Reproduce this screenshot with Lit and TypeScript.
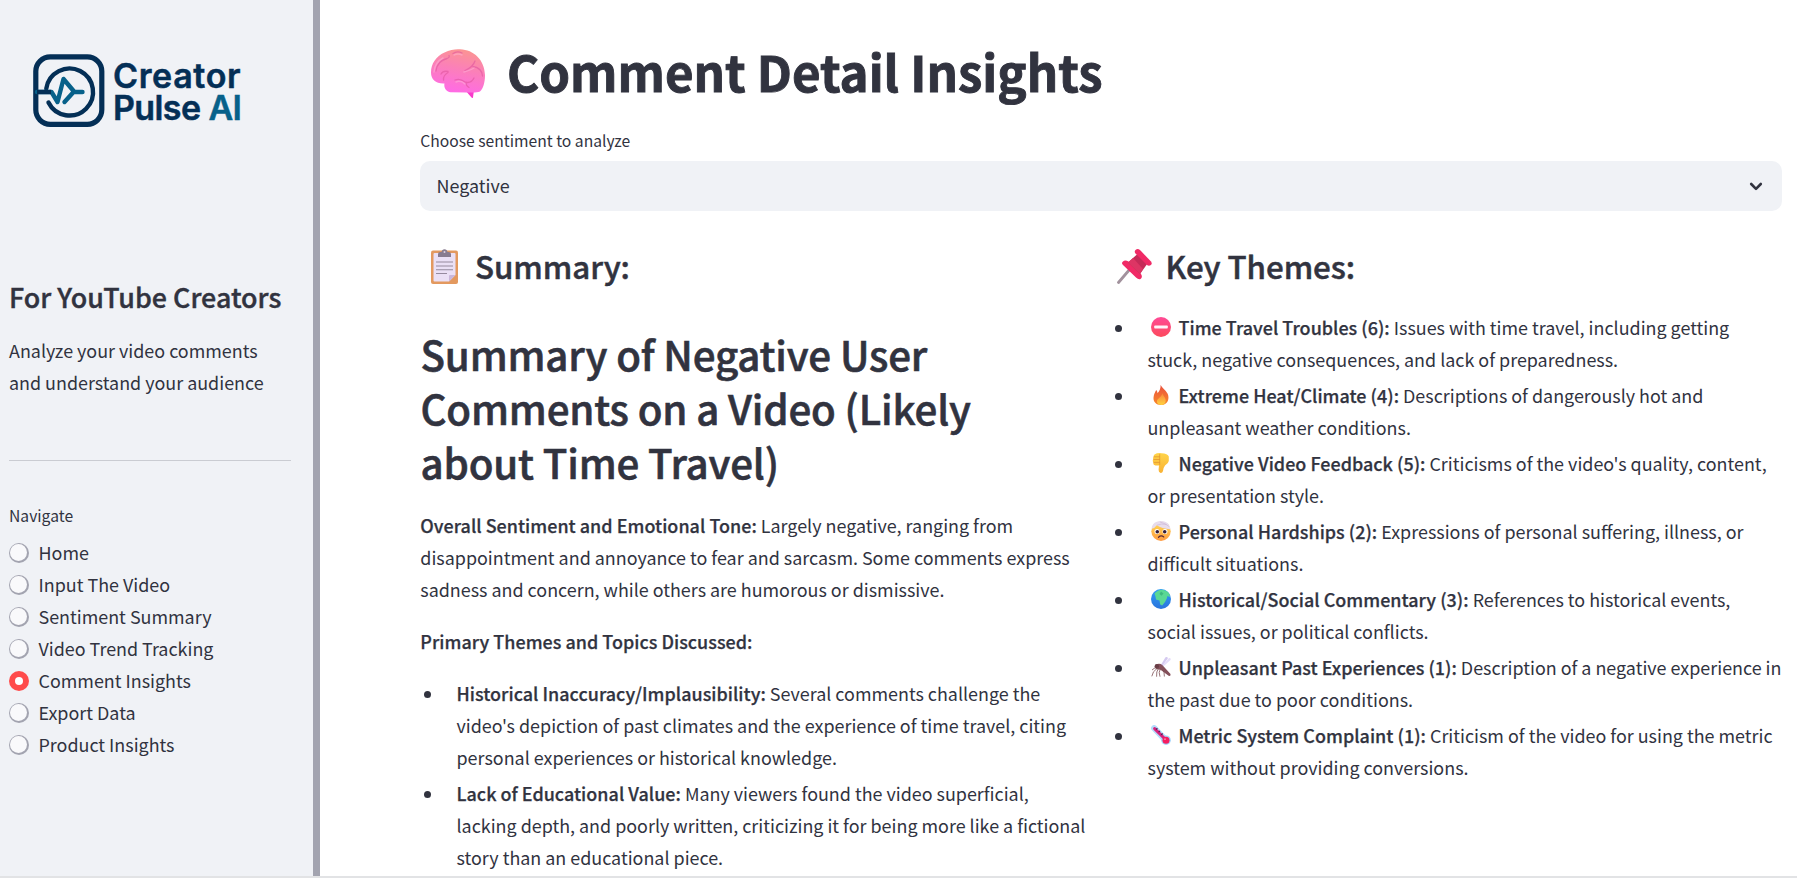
import { LitElement, html, svg, css } from 'lit';
import { customElement } from 'lit/decorators.js';

const g = (id: string, a: string, b: string) =>
  svg`<linearGradient id=${id} x1="0" y1="0" x2="0" y2="1"><stop offset="0" stop-color=${a}/><stop offset="1" stop-color=${b}/></linearGradient>`;

const icons: Record<string, unknown> = {
  stop: svg`${g('st', '#ff4a96', '#fc4a5c')}<circle cx="10" cy="10" r="10" fill="url(#st)"/><rect x="3.2" y="8.4" width="13.6" height="3.2" rx=".8" fill="#fff3fa"/>`,
  fire: svg`${g('fi', '#e9503c', '#f98a2a')}${g('fj', '#f9823a', '#ffd23f')}
    <path d="M9.600 0C11 3 14.500 5 16.500 8.500C18.800 13 17.200 20 10.200 20C4.800 20 2.300 16.800 2.500 12.800C2.700 9.500 4 7.200 5.200 5C6.100 6 6.400 7 6.500 8.200C8.600 6 9.800 3 9.600 0Z" fill="url(#fi)"/>
    <path d="M11.500 8C11.800 11 15 12.500 14.700 16C14.400 18.700 12.600 19.900 10.400 19.900C7.600 19.900 5.600 18.300 6 15.800C6.300 13.600 10.800 12 11.500 8Z" fill="url(#fj)"/>`,
  down: svg`${g('dn', '#ffd44a', '#f9b233')}
    <path d="M3.500 1.500Q6-.200 10.500.200Q16.800.400 17.800 3.500V8Q17.400 10.500 14 12.500Q12.400 14.500 12 18Q11.300 20.300 9.200 19.800Q7.200 19 7.700 15.500L8 12.500H4.500Q1.900 12 2.300 9.500Q1.200 7.800 2.300 6.300Q1.600 4.700 2.700 3.700Q2.500 2.200 3.500 1.500Z" fill="url(#dn)"/>
    <path d="M3 3.800H8.300M2.800 6.500H8.400M3 9.400H8.400M8.700 1.500V11.500" stroke="#e0902f" stroke-width=".7" fill="none" stroke-linecap="round"/>`,
  hurt: svg`${g('hu', '#ffdd55', '#ff9b43')}<circle cx="10" cy="10.200" r="9.700" fill="url(#hu)"/>
    <path d="M.6 7.800C1 2.300 5.400 0 10.500.1C15.800.2 19 3.600 19.500 8.200C14 8.300 9 6.500 5.800 4.300Q3.800 7.400.6 7.800Z" fill="#e7dced"/><path d="M6 4.200Q10.500 2.200 15.500 3.500M9 1Q14 2 18 5.500" stroke="#c9b3d3" stroke-width=".6" fill="none"/>
    <circle cx="6" cy="10.600" r="2.500" fill="#fff"/><circle cx="14" cy="10.600" r="2.500" fill="#fff"/><circle cx="6.300" cy="10.700" r="1.800" fill="#38203a"/><circle cx="13.700" cy="10.700" r="1.800" fill="#38203a"/>
    <path d="M7.500 16.300Q10 13.900 12.800 15.900" stroke="#5a2735" stroke-width="1.200" fill="none" stroke-linecap="round"/>`,
  globe: svg`${g('gl', '#2f9df5', '#2a74dc')}<circle cx="10" cy="10" r="10" fill="url(#gl)"/>
    <path d="M3.500 4.500Q6.500 1 11 .800Q16 1.200 18.500 5L19 8L16.500 7L15.800 9.500L14 13L11.200 16.500L9.200 15.500L8.500 11.500L5 10.500L4.500 7.500Z" fill="#5ad894"/><path d="M10 2.500L12.500 4.500L10.500 6.700L8.500 5Z" fill="#3eb97e"/>`,
  mosquito: svg`<path d="M9.500 8.500L14.500.200Q17-.500 16.800 1.500L11 9.500Z" fill="#d5caf0"/><path d="M11 9L18 1Q20.300.800 19.500 3L12 9.800Z" fill="#e5dcf9"/>
    <path d="M4.500 8.200Q8 5.300 11.500 8.200L19.500 17Q20 19.500 17.600 18.800L9.500 12.800L6.500 12.300L4.500 11.500Z" fill="#84505a"/><circle cx="5.800" cy="9.300" r="2.200" fill="#693d46"/>
    <path d="M6.500 11L2.500 14.800L.800 19.300M7.500 11.500L5.800 15L5.600 19.700M9.500 11.500L8.200 15.500L9 19.700M11.500 12L13 15.500L13.400 19.500M5 10L1 13" stroke="#7c5056" stroke-width=".8" fill="none"/>`,
  thermo: svg`<path d="M3.200 3.200L15 15.500" stroke="#b4dcfb" stroke-width="6.200" stroke-linecap="round"/><circle cx="15" cy="15.200" r="4.800" fill="#a3d5fc"/><path d="M3.600 3.600L15 15" stroke="#d8227c" stroke-width="3" stroke-linecap="round"/><circle cx="15" cy="15.200" r="3.500" fill="#f51d60"/><path d="M6.400 3.200L5 4.600M9 5.800L7.600 7.200M11.600 8.500L10.200 9.900" stroke="#4b1c55" stroke-width="1.200"/><circle cx="14" cy="14.200" r=".9" fill="#ff86ac"/>`,
};

const brain = svg`<svg class="brain" viewBox="0 0 54 50">
  <defs><linearGradient id="br" x1=".65" y1="0" x2=".4" y2="1"><stop offset="0" stop-color="#fb9591"/><stop offset=".45" stop-color="#fb80b8"/><stop offset="1" stop-color="#ff6ae6"/></linearGradient></defs>
  <path d="M34 41H43L42 48.500Q41.500 49.600 40.500 48.600Z" fill="#f93acb"/>
  <path d="M13.500 34.500C5 35 0 30.500 0 23.500C0 15 5 7 13.500 3.500C19 .500 25 0 29 .300C43 .800 53.500 11 54 26C54.100 32 52.500 40 49 42.500C46 43.800 41 43.400 36 43.400L19.500 43.200C15.500 42.500 12.500 39 13.500 34.500Z" fill="url(#br)"/>
  <g fill="none" stroke="#e0559f" stroke-width="1.300" stroke-linecap="round" opacity=".6">
    <path d="M5 22Q6 12 16 9.500Q19 8.500 18 6.500M22 4.500Q26 1.500 31 4M10 25Q12 21.500 17 22.500M12.500 31Q12 26.500 17 23.500M44 12Q42 18 34 21.500M42 17.500Q51 19 51.500 27M24 31Q29 29 34 33Q40 35 43 29M35 33Q35 37 38 38.500"/>
  </g>
  <g fill="none" stroke="#ffb3dc" stroke-width="1.500" stroke-linecap="round" opacity=".5"><path d="M3 23Q4 13 12 9M25 33Q30 31 34 35M23 6Q27 4 31 6M33 23Q40 21 43 19"/></g>
</svg>`;

const clipboard = svg`<svg class="clip" viewBox="0 0 27 35">
  <rect x="0" y="1.500" width="27" height="33.500" rx="2" fill="#e3995f"/>
  <path d="M2.500 5Q2.500 4 3.500 4H23.500Q24.500 4 24.500 5V26L18 32.500H3.500Q2.500 32.500 2.500 31.500Z" fill="#eae0f5"/>
  <path d="M24.500 26L18 32.500V27Q18 26 19 26Z" fill="#c9b7da"/>
  <path d="M7 8V5Q7 3 9.500 3H10.500Q11 .200 13.500 .200Q16 .200 16.500 3H17.500Q20 3 20 5V8Z" fill="#877b8f"/><circle cx="13.500" cy="3" r="1" fill="#d9cfe0"/>
  <path d="M5 13H22M5 17H22M5 20.700H22M5 24.500H16" stroke="#958a9e" stroke-width="1.100"/>
</svg>`;

const pin = svg`<svg class="pin" viewBox="0 0 35 35">
  <path d="M13 20L1.500 33.500" stroke="#a2929d" stroke-width="2.800" stroke-linecap="round"/>
  <path d="M6 12.500Q8 10.500 11.500 12.500L24 25Q26 28 23.500 30Q21.500 31 19 28.500L6 16Q4 14 6 12.500Z" fill="#f02a66"/>
  <path d="M11 13.500L20.500 5L30.500 14.500L23 25Z" fill="#c52a58"/><path d="M11 13.500L16 9L26 20L23 25Z" fill="#dd3564"/>
  <path d="M18.500 1Q20.500-.900 23 1L34 12.500Q35.600 15 33.500 16.300Q31.500 17.400 29.500 15.500L18.500 4.500Q17 2.500 18.500 1Z" fill="#f02a66"/>
</svg>`;

const logo = svg`<svg class="mark" viewBox="0 0 72 74">
  <rect x="2.800" y="2.800" width="66" height="67.500" rx="14.500" fill="none" stroke="#042f56" stroke-width="5.200"/>
  <path d="M13.300 34.500A23.500 23.500 0 1 1 15.500 48.500" fill="none" stroke="#042f56" stroke-width="4.400" stroke-linecap="round"/>
  <path d="M4 38H18.500L24.500 48L30.500 25L41 37.500L31.500 48M41 38H49.500" fill="none" stroke="#07618a" stroke-width="4.400" stroke-linecap="round" stroke-linejoin="round"/>
  <path d="M4 38H18" stroke="#042f56" stroke-width="4.400"/>
</svg>`;

const themes = [
  ['stop', 'Time Travel Troubles (6):', 'Issues with time travel, including getting', 'stuck, negative consequences, and lack of preparedness.'],
  ['fire', 'Extreme Heat/Climate (4):', 'Descriptions of dangerously hot and', 'unpleasant weather conditions.'],
  ['down', 'Negative Video Feedback (5):', "Criticisms of the video's quality, content,", 'or presentation style.'],
  ['hurt', 'Personal Hardships (2):', 'Expressions of personal suffering, illness, or', 'difficult situations.'],
  ['globe', 'Historical/Social Commentary (3):', 'References to historical events,', 'social issues, or political conflicts.'],
  ['mosquito', 'Unpleasant Past Experiences (1):', 'Description of a negative experience in', 'the past due to poor conditions.'],
  ['thermo', 'Metric System Complaint (1):', 'Criticism of the video for using the metric', 'system without providing conversions.'],
];

const pages = ['Home', 'Input The Video', 'Sentiment Summary', 'Video Trend Tracking', 'Comment Insights', 'Export Data', 'Product Insights'];

@customElement('app-root')
export class AppRoot extends LitElement {
  static styles = css`
    :host { display: block; font-family: "Noto Sans CJK SC", "Noto Sans", sans-serif; font-size: 17.91px; line-height: 32px; color: #31333f; }
    * { box-sizing: border-box; margin: 0; }
    svg { display: block; }
    .frame { display: flex; height: 878px; overflow: hidden; background: #fff; border-bottom: 2px solid #e2e3e5; }
    .side { width: 320px; flex: none; background: #f0f2f6; border-right: 7px solid #a3a4b0; padding: 54px 22px 0 9px; }
    .logo { display: flex; gap: 8px; height: 76px; padding-left: 24px; }
    .mark { width: 72px; height: 74px; flex: none; }
    .word { font: 600 34px/31.5px Inter, sans-serif; color: #042f56; padding-top: 6px; white-space: nowrap; -webkit-text-stroke: .5px; }
    .w1 { letter-spacing: .65px; }
    .w2 { letter-spacing: -.6px; }
    .ai { color: #07618a; }
    .side h2 { font-size: 26.85px; line-height: 36px; font-weight: 500; margin-top: 149px; white-space: nowrap; -webkit-text-stroke: .4px #31333f; }
    .intro { margin-top: 19px; white-space: nowrap; }
    .rule { height: 1px; background: #caccd2; margin: 62px 0 41px; }
    .label { font-size: 15.67px; line-height: 28px; }
    .radio { display: flex; gap: 9.5px; align-items: center; height: 32px; white-space: nowrap; }
    .radio span:last-child { margin-top: -2px; }
    .nav { padding-top: 7px; }
    .dot { width: 20px; height: 20px; border-radius: 50%; background: #a3a4b0; display: flex; }
    .dot::after { content: ""; width: 17.7px; height: 17.7px; margin: .8px 0 0 .8px; border-radius: 50%; background: #f9f9fb; }
    .dot.on { background: #ff4b4b; }
    .dot.on::after { width: 8px; height: 8px; margin: 6px; background: #fff; }
    .main { flex: 1; padding: 41px 15px 0 100px; white-space: nowrap; }
    .title { display: flex; gap: 22px; height: 66px; padding: 8px 0 0 11px; }
    .title h1 { font-size: 49.2px; line-height: 66px; font-weight: 700; margin-top: -11px; -webkit-text-stroke: .9px #31333f; }
    .brain { width: 54px; height: 50px; flex: none; }
    .choose { margin: 20px 0 6px; padding-left: .3px; }
    .select { height: 50px; border-radius: 10px; background: #f0f2f6; padding: 0 19px 2px 16.5px; display: flex; align-items: center; justify-content: space-between; }
    .chev { width: 14px; height: 9px; margin-top: 2px; }
    .cols { display: flex; gap: 20px; margin-top: 35px; }
    .left, .right { width: 671px; }
    .head { display: flex; gap: 17px; height: 42px; padding: 3px 0 0 11px; }
    .head h3 { font-size: 31.3px; line-height: 42px; font-weight: 500; margin-top: -4px; letter-spacing: -.05px; -webkit-text-stroke: .5px #31333f; }
    .clip { width: 27px; height: 35px; }
    .pin { width: 35px; height: 35px; }
    .right .head { padding-left: 6px; gap: 13.5px; }
    .big { font-size: 40.3px; line-height: 54px; font-weight: 500; margin-top: 39px; letter-spacing: -.17px; padding-left: .5px; -webkit-text-stroke: .6px #31333f; }
    b { font-weight: 500; letter-spacing: .035px; -webkit-text-stroke: .25px #31333f; }
    .para { margin-top: 20px; padding-left: .3px; }
    ul { padding: 0; list-style: none; margin-top: 20px; }
    li { display: flex; margin-bottom: 4px; }
    li::before { content: ""; width: 7px; height: 7px; border-radius: 50%; background: #31333f; margin: 14px 25.5px 0 4px; flex: none; }
    .right ul { margin-top: 23px; }
    .first { display: flex; }
    .emoji { width: 20px; height: 20px; margin: 6px 8px 0 3px; }
    .sp { white-space: pre; }
  `;

  render() {
    return html`<div class="frame">
      <aside class="side">
        <div class="logo">${logo}<div class="word"><div class="w1">Creator</div><div class="w2">Pulse <span class="ai">AI</span></div></div></div>
        <h2>For YouTube Creators</h2>
        <p class="intro">Analyze your video comments<br>and understand your audience</p>
        <div class="rule"></div>
        <div class="label">Navigate</div>
        <nav class="nav">${pages.map(p => html`<div class="radio"><span class="dot ${p === 'Comment Insights' ? 'on' : ''}"></span><span>${p}</span></div>`)}</nav>
      </aside>
      <main class="main">
        <div class="title">${brain}<h1>Comment Detail Insights</h1></div>
        <div class="label choose">Choose sentiment to analyze</div>
        <div class="select"><span>Negative</span><svg class="chev" viewBox="0 0 14 9"><path d="M2.200 2L7 6.800L11.800 2" fill="none" stroke="#31333f" stroke-width="2.600" stroke-linecap="round" stroke-linejoin="round"/></svg></div>
        <div class="cols">
          <section class="left">
            <div class="head">${clipboard}<h3>Summary:</h3></div>
            <h1 class="big">Summary of Negative User<br>Comments on a Video (Likely<br>about Time Travel)</h1>
            <p class="para"><b>Overall Sentiment and Emotional Tone:</b> Largely negative, ranging from<br>disappointment and annoyance to fear and sarcasm. Some comments express<br>sadness and concern, while others are humorous or dismissive.</p>
            <p class="para"><b>Primary Themes and Topics Discussed:</b></p>
            <ul>
              <li><div><b>Historical Inaccuracy/Implausibility:</b> Several comments challenge the<br>video's depiction of past climates and the experience of time travel, citing<br>personal experiences or historical knowledge.</div></li>
              <li><div><b>Lack of Educational Value:</b> Many viewers found the video superficial,<br>lacking depth, and poorly written, criticizing it for being more like a fictional<br>story than an educational piece.</div></li>
            </ul>
          </section>
          <section class="right">
            <div class="head">${pin}<h3>Key Themes:</h3></div>
            <ul>${themes.map(([i, b, t, u]) => html`<li><div><div class="first"><svg class="emoji" viewBox="0 0 20 20">${icons[i]}</svg><b>${b}</b><span class="sp"> ${t}</span></div><div>${u}</div></div></li>`)}</ul>
          </section>
        </div>
      </main>
    </div>`;
  }
}
